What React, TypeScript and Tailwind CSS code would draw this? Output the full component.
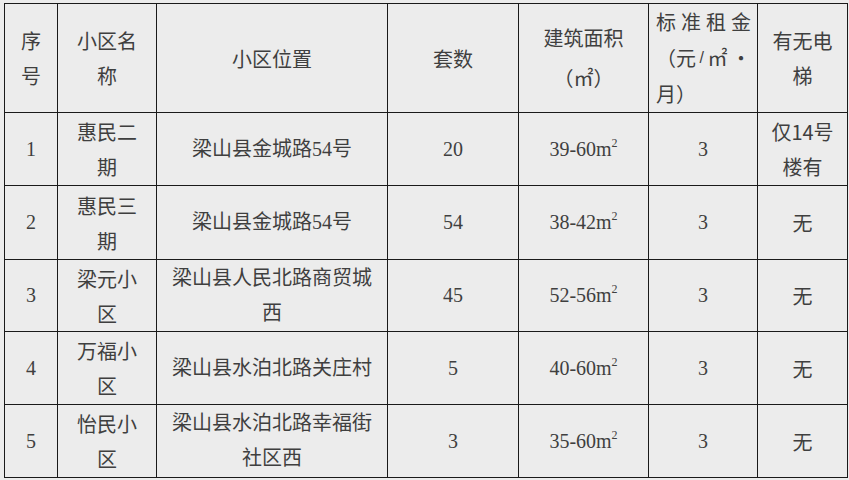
const cjk = 'font-["Noto_Sans_CJK_SC",sans-serif]';
const mixed = 'font-["Liberation_Serif","Noto_Sans_CJK_SC",serif]';

type Row = {
  no: string;
  name: string[];
  place: string[];
  count: string;
  area: string;
  rent: string;
  lift: string[];
};

const rows: Row[] = [
  { no: '1', name: ['惠民二', '期'], place: ['梁山县金城路54号'], count: '20', area: '39-60', rent: '3', lift: ['仅14号', '楼有'] },
  { no: '2', name: ['惠民三', '期'], place: ['梁山县金城路54号'], count: '54', area: '38-42', rent: '3', lift: ['无'] },
  { no: '3', name: ['梁元小', '区'], place: ['梁山县人民北路商贸城', '西'], count: '45', area: '52-56', rent: '3', lift: ['无'] },
  { no: '4', name: ['万福小', '区'], place: ['梁山县水泊北路关庄村'], count: '5', area: '40-60', rent: '3', lift: ['无'] },
  { no: '5', name: ['怡民小', '区'], place: ['梁山县水泊北路幸福街', '社区西'], count: '3', area: '35-60', rent: '3', lift: ['无'] },
];

const rowHeights = ['h-[73px]', 'h-[74px]', 'h-[72px]', 'h-[73px]', 'h-[73px]'];

function Lines({ items }: { items: string[] }) {
  return (
    <>
      {items.map((t, i) => (
        <div key={i}>{t}</div>
      ))}
    </>
  );
}

const td = 'border border-[#1a1a1a] text-center align-middle p-0 overflow-hidden';

export default function App() {
  return (
    <div className="w-[849px] h-[480px] overflow-hidden bg-[#ececec] pt-[3px] pl-[4px] text-[#3f3f3f] text-[20px] leading-[35px]">
      <table className="border-collapse table-fixed w-[843px]">
        <colgroup>
          <col className="w-[53px]" />
          <col className="w-[99px]" />
          <col className="w-[231px]" />
          <col className="w-[131px]" />
          <col className="w-[130px]" />
          <col className="w-[109px]" />
          <col className="w-[90px]" />
        </colgroup>
        <thead>
          <tr className={`h-[108px] ${cjk}`}>
            <th className={`${td} font-normal`}>
              <Lines items={['序', '号']} />
            </th>
            <th className={`${td} font-normal`}>
              <Lines items={['小区名', '称']} />
            </th>
            <th className={`${td} font-normal`}>小区位置</th>
            <th className={`${td} font-normal`}>套数</th>
            <th className={`${td} font-normal`}>
              <div className="leading-[40px]">建筑面积</div>
              <div className="leading-[40px]">（㎡）</div>
            </th>
            <th className={`${td} font-normal pl-[7px] pr-[6px] text-left leading-[36px]`}>
              <div className="flex justify-between">
                <span>标</span>
                <span>准</span>
                <span>租</span>
                <span>金</span>
              </div>
              <div className="flex justify-between whitespace-nowrap">
                <span>（元</span>
                <span className='font-["Liberation_Sans",sans-serif] text-[16px]'>/</span>
                <span>㎡</span>
                <span>·</span>
              </div>
              <div>月）</div>
            </th>
            <th className={`${td} font-normal`}>
              <Lines items={['有无电', '梯']} />
            </th>
          </tr>
        </thead>
        <tbody>
          {rows.map((r, i) => (
            <tr key={r.no} className={rowHeights[i]}>
              <td className={`${td} font-["Liberation_Serif",serif]`}>{r.no}</td>
              <td className={`${td} ${cjk}`}>
                <Lines items={r.name} />
              </td>
              <td className={`${td} ${mixed}`}>
                <Lines items={r.place} />
              </td>
              <td className={`${td} font-["Liberation_Serif",serif]`}>{r.count}</td>
              <td className={`${td} font-["Liberation_Serif",serif]`}>
                {r.area}m<sup className="text-[12px] -top-[9px]">2</sup>
              </td>
              <td className={`${td} font-["Liberation_Serif",serif]`}>{r.rent}</td>
              <td className={`${td} ${cjk}`}>
                <Lines items={r.lift} />
              </td>
            </tr>
          ))}
        </tbody>
      </table>
    </div>
  );
}
